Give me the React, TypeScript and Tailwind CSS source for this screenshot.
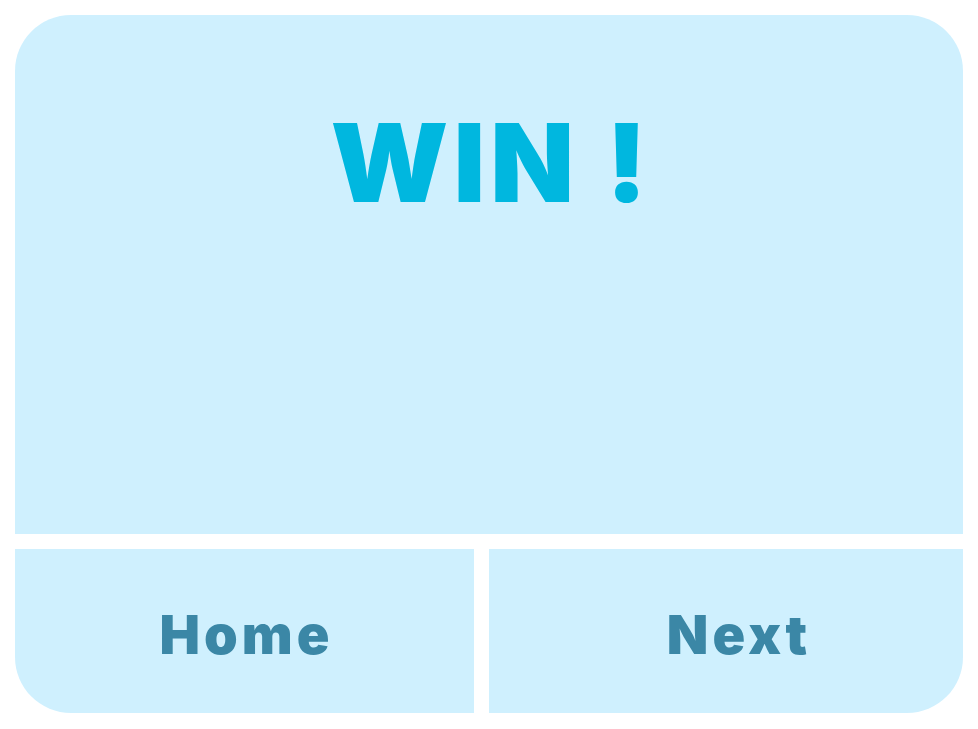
export default function App() {
  return (
    <div className="w-[978px] h-[729px] bg-white p-[15px] flex flex-col gap-[15px] font-['Inter','Lato',sans-serif]">
      {/* result panel */}
      <div className="h-[519px] bg-[#cff0fe] rounded-t-[56px] flex justify-center pt-[93px]">
        <h1 className="text-[109px] leading-none font-black tracking-[5px] pl-[5px] text-[#00b7df] h-fit">WIN !</h1>
      </div>

      {/* buttons */}
      <div className="h-[164px] flex gap-[15px]">
        <button className="w-[459px] bg-[#cff0fe] rounded-bl-[56px] flex items-center justify-center pt-[6px] pl-[4px] text-[54px] font-black tracking-[4px] text-[#3b87a6]">
          Home
        </button>
        <button className="flex-1 bg-[#cff0fe] rounded-br-[56px] flex items-center justify-center pt-[6px] pl-[26px] text-[54px] font-black tracking-[4px] text-[#3b87a6]">
          Next
        </button>
      </div>
    </div>
  );
}
